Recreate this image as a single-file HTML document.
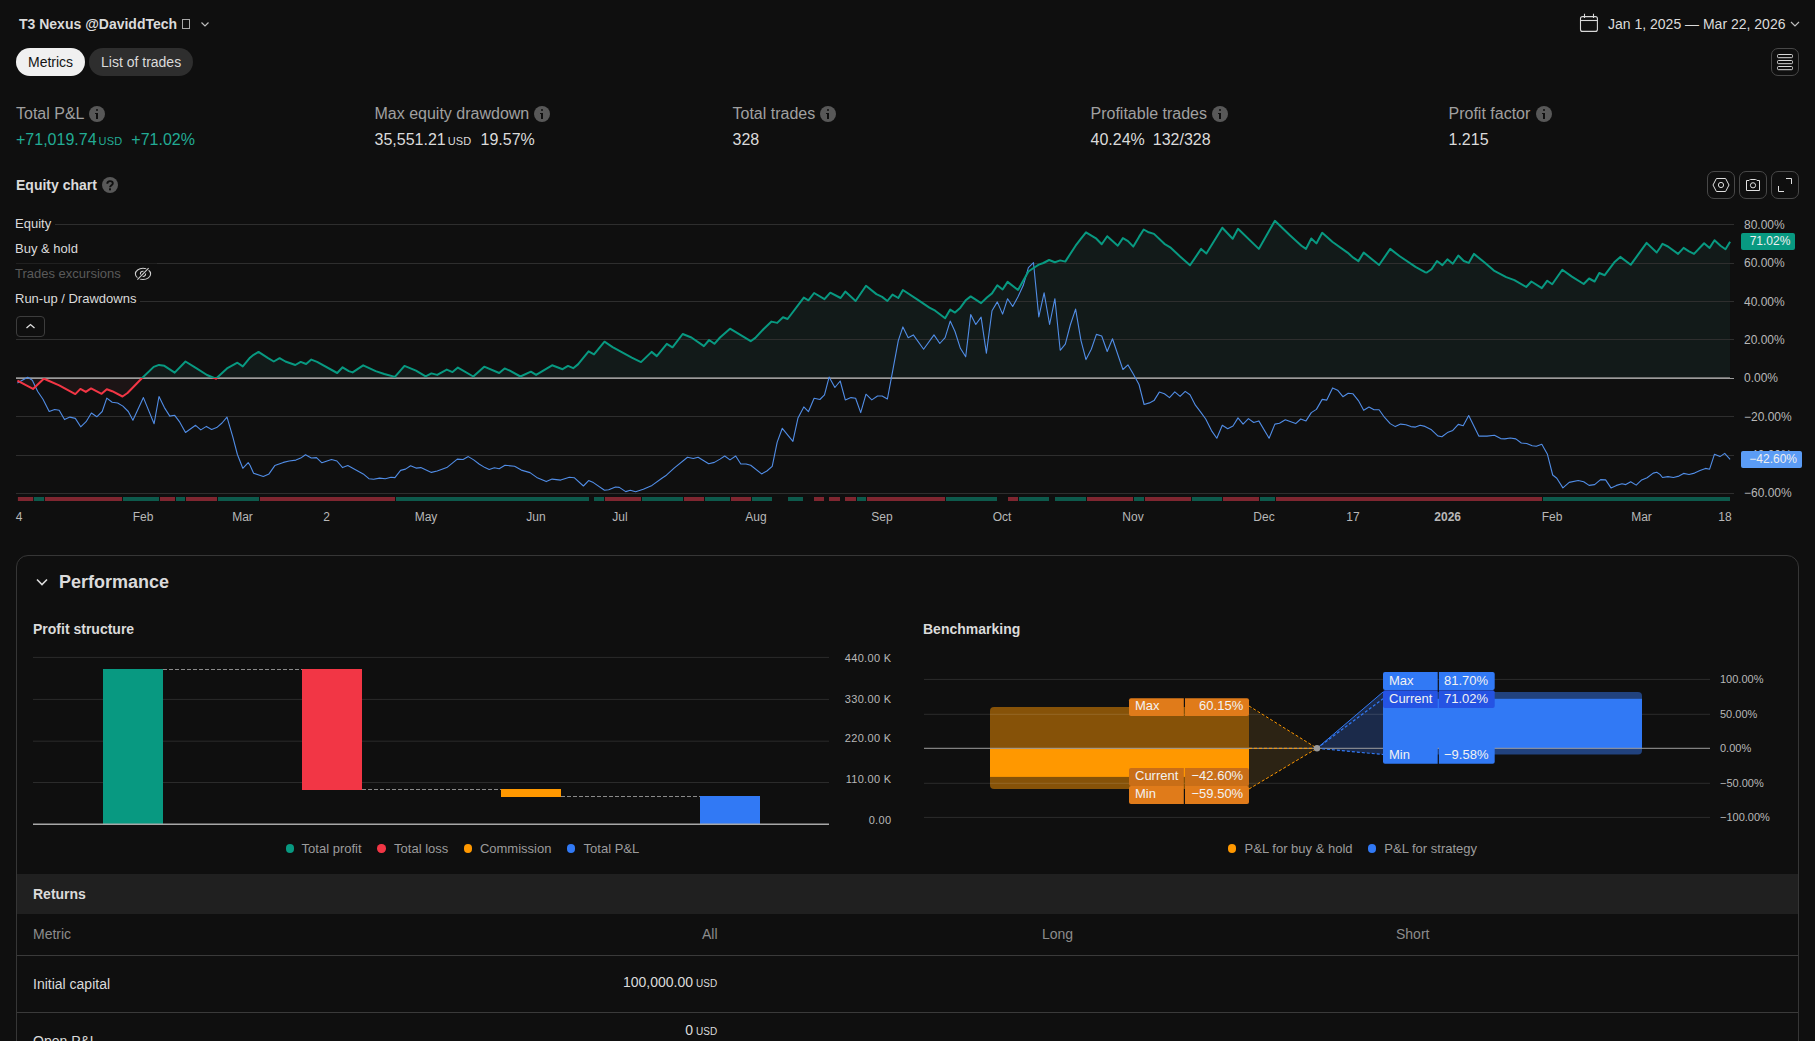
<!DOCTYPE html>
<html><head><meta charset="utf-8">
<style>
*{box-sizing:border-box;margin:0;padding:0}
html,body{width:1815px;height:1041px;overflow:hidden;background:#0f0f0f;font-family:"Liberation Sans",sans-serif;color:#dbdbdb}
.a{position:absolute;white-space:nowrap}
.t13{font-size:13px;line-height:13px}
.t14{font-size:14px;line-height:14px}
.t16{font-size:16px;line-height:16px}
.t12{font-size:12px;line-height:12px}
.t11{font-size:11px;line-height:11px}
.b{font-weight:700}
.lbl{color:#a0a0a0}
.info{display:inline-block;width:16px;height:16px;border-radius:50%;background:#585858;position:absolute}
.info:before{content:"";position:absolute;left:7px;top:2.6px;width:2px;height:2px;background:#0f0f0f;border-radius:1px}
.info:after{content:"";position:absolute;left:6px;top:7px;width:3px;height:5.8px;background:linear-gradient(#0f0f0f,#0f0f0f) 1px 0/2px 100% no-repeat,linear-gradient(#0f0f0f,#0f0f0f) 0 0/1px 1.3px no-repeat}
.usd{font-size:11px}
.btn{position:absolute;width:28px;height:28px;border:1px solid #484848;border-radius:7px}
.grey{color:#8c8c8c}
.axl{color:#b8b8b8}
.legt{color:#9c9c9c}
</style></head>
<body>
<!-- header -->
<div class="a t14 b" style="left:19px;top:17.15px">T3 Nexus @DaviddTech</div>
<div class="a" style="left:182px;top:19px;width:8px;height:10px;border:1px solid #a8a8a8"></div>
<svg class="a" style="left:199px;top:19px" width="12" height="10" viewBox="0 0 12 10"><path d="M2.5 3.5 L6 7 L9.5 3.5" fill="none" stroke="#bdbdbd" stroke-width="1.2"/></svg>

<svg class="a" style="left:1578px;top:13px" width="22" height="20" viewBox="0 0 22 20"><rect x="2.5" y="3.6" width="16.9" height="14.8" rx="2" fill="none" stroke="#d8d8d8" stroke-width="1.1"/><path d="M2.5 7.5 H19.4" stroke="#d8d8d8" stroke-width="1.1"/><path d="M6.5 0.7 V5 M15.5 0.7 V5" stroke="#d8d8d8" stroke-width="1.1"/></svg>
<div class="a t14" style="left:1608px;top:17.45px">Jan 1, 2025 — Mar 22, 2026</div>
<svg class="a" style="left:1789px;top:19px" width="12" height="10" viewBox="0 0 12 10"><path d="M2 3 L6 7 L10 3" fill="none" stroke="#bdbdbd" stroke-width="1.2"/></svg>

<!-- tabs -->
<div class="a" style="left:16px;top:48px;width:69px;height:28px;border-radius:14px;background:#f0f0f0"></div>
<div class="a t14" style="left:28px;top:54.95px;color:#131313">Metrics</div>
<div class="a" style="left:89px;top:48px;width:104px;height:28px;border-radius:14px;background:#2e2e2e"></div>
<div class="a t14" style="left:101px;top:54.95px">List of trades</div>

<div class="btn" style="left:1771px;top:48px"></div>
<svg class="a" style="left:1771px;top:48px" width="28" height="28" viewBox="0 0 28 28"><g fill="none" stroke="#d8d8d8" stroke-width="1"><rect x="6.5" y="6.5" width="15" height="3.2" rx="1"/><rect x="6.5" y="12.5" width="15" height="3.2" rx="1"/><rect x="6.5" y="18.5" width="15" height="3.2" rx="1"/></g></svg>

<!-- metrics -->
<div class="a t16 lbl" style="left:16px;top:105.7px">Total P&amp;L</div><span class="info" style="left:89px;top:106px"></span>
<div class="a t16" style="left:16px;top:131.7px;color:#22ab94">+71,019.74<span class="usd" style="margin-left:2px;letter-spacing:0.2px">USD</span><span style="margin-left:9px">+71.02%</span></div>

<div class="a t16 lbl" style="left:374.5px;top:105.7px">Max equity drawdown</div><span class="info" style="left:534px;top:106px"></span>
<div class="a t16" style="left:374.5px;top:131.7px">35,551.21<span class="usd" style="margin-left:2px;letter-spacing:0.2px">USD</span><span style="margin-left:9px">19.57%</span></div>

<div class="a t16 lbl" style="left:732.5px;top:105.7px">Total trades</div><span class="info" style="left:820px;top:106px"></span>
<div class="a t16" style="left:732.5px;top:131.7px">328</div>

<div class="a t16 lbl" style="left:1090.5px;top:105.7px">Profitable trades</div><span class="info" style="left:1212px;top:106px"></span>
<div class="a t16" style="left:1090.5px;top:131.7px">40.24%<span style="margin-left:8px">132/328</span></div>

<div class="a t16 lbl" style="left:1448.5px;top:105.7px">Profit factor</div><span class="info" style="left:1536px;top:106px"></span>
<div class="a t16" style="left:1448.5px;top:131.7px">1.215</div>

<!-- equity chart header -->
<div class="a t14 b" style="left:16px;top:178px">Equity chart</div>

<div class="btn" style="left:1707px;top:171px"></div>
<div class="btn" style="left:1739px;top:171px"></div>
<div class="btn" style="left:1771px;top:171px"></div>
<svg class="a" style="left:1707px;top:171px" width="28" height="28" viewBox="0 0 28 28"><g fill="none" stroke="#e0e0e0" stroke-width="1"><path d="M6 14 L9.4 7.5 H18.6 L22 14 L18.6 20.5 H9.4Z"/><circle cx="14" cy="14" r="2.6"/></g></svg>
<svg class="a" style="left:1739px;top:171px" width="28" height="28" viewBox="0 0 28 28"><g fill="none" stroke="#e0e0e0" stroke-width="1"><path d="M7.5 9.5 H10 Q10.5 8.5 11.5 8.5 H16.5 Q17.5 8.5 18 9.5 H20.5 V19.5 H7.5Z"/><circle cx="14" cy="14.3" r="2.6"/></g></svg>
<svg class="a" style="left:1771px;top:171px" width="28" height="28" viewBox="0 0 28 28"><g fill="none" stroke="#e0e0e0" stroke-width="1"><path d="M15 7.5 H20.5 V13"/><path d="M7.5 15 V20.5 H13"/></g></svg>
<svg class="a" style="left:102px;top:177px" width="16" height="16" viewBox="0 0 16 16"><circle cx="8" cy="8" r="8" fill="#585858"/><path d="M5.3 6.7 C5.3 5 6.4 4.1 8 4.1 C9.6 4.1 10.8 5 10.8 6.4 C10.8 8.1 8 8.4 8 10.3" fill="none" stroke="#0f0f0f" stroke-width="1.9"/><rect x="7" y="11.3" width="2" height="2" fill="#0f0f0f"/></svg>

<!-- chart legend -->
<div class="a t13" style="left:15px;top:217px;background:#0f0f0f;padding-right:4px;z-index:3">Equity</div>
<div class="a t13" style="left:15px;top:241.7px;background:#0f0f0f;padding-right:4px;z-index:3">Buy &amp; hold</div>
<div class="a" style="left:15px;top:262px;width:142px;height:24px;background:rgba(15,15,15,0.45);z-index:2"></div>
<div class="a t13" style="left:15px;top:266.6px;color:#5a5a5a;z-index:3">Trades excursions</div>
<svg class="a" style="left:133px;top:265px;z-index:3" width="20" height="18" viewBox="0 0 20 18"><g fill="none" stroke="#d0d0d0" stroke-width="1.1"><ellipse cx="10" cy="8.9" rx="7.6" ry="5.6"/><circle cx="10" cy="8.8" r="2.6"/></g><path d="M15.6 3.2 L4.4 14.7" stroke="#0f0f0f" stroke-width="3"/><path d="M15.6 3.2 L4.4 14.7" stroke="#d0d0d0" stroke-width="1.1"/></svg>
<div class="a t13" style="left:15px;top:291.8px;background:#0f0f0f;padding-right:4px;z-index:3">Run-up / Drawdowns</div>
<div class="a" style="left:16px;top:316px;width:29px;height:21px;border:1px solid #3d3d3d;border-radius:4px;background:#0f0f0f;z-index:3"></div>
<svg class="a" style="left:16px;top:316px;z-index:3" width="29" height="21" viewBox="0 0 29 21"><path d="M10.5 12 L14.5 8.5 L18.5 12" fill="none" stroke="#e0e0e0" stroke-width="1.3"/></svg>

<!-- badges -->
<div class="a" style="left:1741.4px;top:233px;width:53.6px;height:17px;border-radius:2px;background:#089981;z-index:3"></div>
<div class="a t12" style="left:1741.4px;top:234.7px;width:49px;text-align:right;color:#f0f0f0;z-index:4">71.02%</div>
<div class="a" style="left:1741px;top:451px;width:61px;height:17px;border-radius:2px;background:#5b9cf6;z-index:3"></div>
<div class="a t12" style="left:1741px;top:452.7px;width:56px;text-align:right;color:#f0f0f0;z-index:4">−42.60%</div>

<!-- CHART -->
<svg class="a" style="left:0;top:200px" width="1815" height="340" viewBox="0 200 1815 340">
<defs><clipPath id="up"><rect x="0" y="200" width="1815" height="178.0"/></clipPath><clipPath id="dn"><rect x="0" y="378.0" width="1815" height="200"/></clipPath></defs>
<path d="M17.4 380.7 L33.0 388.9 L43.8 378.7 L46.9 380.0 L59.2 385.3 L75.3 394.1 L80.4 388.9 L85.8 391.9 L91.1 388.4 L101.6 393.8 L106.8 389.2 L112.2 391.2 L122.5 396.5 L127.5 393.0 L141.4 378.7 L153.7 366.9 L159.0 364.9 L164.4 365.8 L174.7 372.6 L185.5 361.5 L196.2 368.1 L207.0 375.0 L215.9 378.7 L227.0 368.4 L237.4 362.7 L242.8 366.4 L250.0 357.7 L253.6 354.8 L258.5 351.9 L268.1 358.2 L273.8 361.5 L279.6 358.2 L285.4 361.5 L295.3 365.0 L300.7 361.9 L306.1 364.0 L311.3 359.6 L317.1 361.9 L337.2 373.0 L342.6 367.3 L348.8 371.1 L352.6 372.4 L363.2 365.3 L375.7 371.1 L384.3 374.0 L394.9 376.9 L404.5 365.9 L416.0 370.7 L425.6 376.3 L431.4 373.4 L437.2 374.9 L446.8 369.6 L452.5 372.1 L457.9 367.6 L473.3 376.5 L484.2 366.7 L499.2 373.0 L504.6 368.4 L509.8 370.7 L520.4 376.5 L530.9 371.7 L536.1 374.9 L552.1 365.3 L562.6 369.2 L568.0 365.9 L573.2 368.2 L578.0 364.4 L588.6 351.3 L594.0 354.4 L604.5 341.7 L612.6 347.1 L631.8 357.6 L641.0 362.1 L651.6 351.9 L656.8 356.1 L666.8 343.8 L672.5 347.3 L682.7 334.0 L691.4 337.5 L703.9 346.1 L709.1 340.0 L714.4 343.8 L720.0 337.5 L730.0 328.7 L740.4 334.9 L750.7 341.2 L755.3 337.9 L763.4 329.2 L771.5 321.6 L777.2 322.9 L783.0 317.2 L787.6 319.0 L803.8 297.6 L808.4 300.3 L814.1 293.0 L824.5 299.2 L830.3 292.7 L840.6 298.0 L845.3 291.6 L855.6 301.0 L866.0 285.8 L876.4 294.1 L882.1 296.9 L887.4 301.0 L892.5 294.6 L898.3 298.0 L902.9 290.0 L917.9 299.9 L929.4 307.7 L935.2 310.7 L945.1 318.3 L950.2 309.6 L955.0 312.6 L960.4 307.7 L965.7 300.3 L970.7 296.4 L981.1 303.1 L986.9 297.5 L992.0 293.4 L997.3 285.3 L1002.6 289.5 L1007.6 281.9 L1018.0 289.9 L1028.4 271.5 L1033.5 268.0 L1038.8 264.6 L1043.4 263.0 L1049.1 260.0 L1054.9 262.3 L1060.2 260.4 L1065.3 261.6 L1075.6 245.7 L1081.0 238.7 L1086.0 232.3 L1096.4 238.7 L1101.7 244.3 L1107.2 236.2 L1117.8 245.7 L1122.9 238.1 L1128.0 241.1 L1133.3 246.6 L1139.0 236.9 L1143.7 229.5 L1148.7 232.3 L1154.0 233.9 L1164.4 243.8 L1170.2 247.3 L1180.1 256.5 L1190.0 265.3 L1201.1 248.9 L1206.4 253.5 L1222.3 227.7 L1232.7 238.7 L1238.0 228.8 L1258.8 248.9 L1274.9 220.8 L1289.9 235.3 L1301.4 245.7 L1306.0 248.9 L1311.3 238.5 L1316.4 243.4 L1322.2 232.8 L1332.6 242.0 L1347.5 252.6 L1353.3 257.7 L1358.4 261.1 L1363.7 252.6 L1379.1 265.0 L1390.2 248.9 L1399.4 256.0 L1415.5 266.9 L1425.0 272.2 L1426.8 272.5 L1431.5 269.2 L1437.0 261.0 L1442.4 265.1 L1447.4 259.3 L1452.8 263.7 L1458.3 255.5 L1463.8 261.0 L1468.7 262.9 L1473.9 253.9 L1484.3 262.3 L1493.9 270.6 L1506.2 277.1 L1514.4 280.1 L1526.2 287.0 L1531.4 281.5 L1541.8 288.1 L1547.3 280.7 L1552.2 284.2 L1562.3 269.7 L1571.9 276.6 L1583.7 284.0 L1589.1 278.5 L1594.6 281.5 L1599.3 273.0 L1604.7 275.2 L1614.3 262.3 L1620.3 256.9 L1630.7 264.8 L1646.6 242.9 L1656.7 252.5 L1660.0 247.8 L1662.5 243.8 L1667.9 246.5 L1678.1 253.9 L1683.6 247.9 L1689.0 251.4 L1694.0 253.9 L1704.1 243.2 L1709.6 247.9 L1714.5 240.2 L1720.5 245.7 L1725.5 249.2 L1730.1 241.8 L1730.1 378.0 L17.4 378.0Z" fill="#121a19" clip-path="url(#up)"/>
<path d="M17.4 380.7 L33.0 388.9 L43.8 378.7 L46.9 380.0 L59.2 385.3 L75.3 394.1 L80.4 388.9 L85.8 391.9 L91.1 388.4 L101.6 393.8 L106.8 389.2 L112.2 391.2 L122.5 396.5 L127.5 393.0 L141.4 378.7 L153.7 366.9 L159.0 364.9 L164.4 365.8 L174.7 372.6 L185.5 361.5 L196.2 368.1 L207.0 375.0 L215.9 378.7 L227.0 368.4 L237.4 362.7 L242.8 366.4 L250.0 357.7 L253.6 354.8 L258.5 351.9 L268.1 358.2 L273.8 361.5 L279.6 358.2 L285.4 361.5 L295.3 365.0 L300.7 361.9 L306.1 364.0 L311.3 359.6 L317.1 361.9 L337.2 373.0 L342.6 367.3 L348.8 371.1 L352.6 372.4 L363.2 365.3 L375.7 371.1 L384.3 374.0 L394.9 376.9 L404.5 365.9 L416.0 370.7 L425.6 376.3 L431.4 373.4 L437.2 374.9 L446.8 369.6 L452.5 372.1 L457.9 367.6 L473.3 376.5 L484.2 366.7 L499.2 373.0 L504.6 368.4 L509.8 370.7 L520.4 376.5 L530.9 371.7 L536.1 374.9 L552.1 365.3 L562.6 369.2 L568.0 365.9 L573.2 368.2 L578.0 364.4 L588.6 351.3 L594.0 354.4 L604.5 341.7 L612.6 347.1 L631.8 357.6 L641.0 362.1 L651.6 351.9 L656.8 356.1 L666.8 343.8 L672.5 347.3 L682.7 334.0 L691.4 337.5 L703.9 346.1 L709.1 340.0 L714.4 343.8 L720.0 337.5 L730.0 328.7 L740.4 334.9 L750.7 341.2 L755.3 337.9 L763.4 329.2 L771.5 321.6 L777.2 322.9 L783.0 317.2 L787.6 319.0 L803.8 297.6 L808.4 300.3 L814.1 293.0 L824.5 299.2 L830.3 292.7 L840.6 298.0 L845.3 291.6 L855.6 301.0 L866.0 285.8 L876.4 294.1 L882.1 296.9 L887.4 301.0 L892.5 294.6 L898.3 298.0 L902.9 290.0 L917.9 299.9 L929.4 307.7 L935.2 310.7 L945.1 318.3 L950.2 309.6 L955.0 312.6 L960.4 307.7 L965.7 300.3 L970.7 296.4 L981.1 303.1 L986.9 297.5 L992.0 293.4 L997.3 285.3 L1002.6 289.5 L1007.6 281.9 L1018.0 289.9 L1028.4 271.5 L1033.5 268.0 L1038.8 264.6 L1043.4 263.0 L1049.1 260.0 L1054.9 262.3 L1060.2 260.4 L1065.3 261.6 L1075.6 245.7 L1081.0 238.7 L1086.0 232.3 L1096.4 238.7 L1101.7 244.3 L1107.2 236.2 L1117.8 245.7 L1122.9 238.1 L1128.0 241.1 L1133.3 246.6 L1139.0 236.9 L1143.7 229.5 L1148.7 232.3 L1154.0 233.9 L1164.4 243.8 L1170.2 247.3 L1180.1 256.5 L1190.0 265.3 L1201.1 248.9 L1206.4 253.5 L1222.3 227.7 L1232.7 238.7 L1238.0 228.8 L1258.8 248.9 L1274.9 220.8 L1289.9 235.3 L1301.4 245.7 L1306.0 248.9 L1311.3 238.5 L1316.4 243.4 L1322.2 232.8 L1332.6 242.0 L1347.5 252.6 L1353.3 257.7 L1358.4 261.1 L1363.7 252.6 L1379.1 265.0 L1390.2 248.9 L1399.4 256.0 L1415.5 266.9 L1425.0 272.2 L1426.8 272.5 L1431.5 269.2 L1437.0 261.0 L1442.4 265.1 L1447.4 259.3 L1452.8 263.7 L1458.3 255.5 L1463.8 261.0 L1468.7 262.9 L1473.9 253.9 L1484.3 262.3 L1493.9 270.6 L1506.2 277.1 L1514.4 280.1 L1526.2 287.0 L1531.4 281.5 L1541.8 288.1 L1547.3 280.7 L1552.2 284.2 L1562.3 269.7 L1571.9 276.6 L1583.7 284.0 L1589.1 278.5 L1594.6 281.5 L1599.3 273.0 L1604.7 275.2 L1614.3 262.3 L1620.3 256.9 L1630.7 264.8 L1646.6 242.9 L1656.7 252.5 L1660.0 247.8 L1662.5 243.8 L1667.9 246.5 L1678.1 253.9 L1683.6 247.9 L1689.0 251.4 L1694.0 253.9 L1704.1 243.2 L1709.6 247.9 L1714.5 240.2 L1720.5 245.7 L1725.5 249.2 L1730.1 241.8 L1730.1 378.0 L17.4 378.0Z" fill="#1c1415" clip-path="url(#dn)"/>
<line x1="16" y1="224.5" x2="1734" y2="224.5" stroke="#2e2e2e" stroke-width="1"/>
<line x1="16" y1="263.5" x2="1734" y2="263.5" stroke="#2e2e2e" stroke-width="1"/>
<line x1="16" y1="301.5" x2="1734" y2="301.5" stroke="#2e2e2e" stroke-width="1"/>
<line x1="16" y1="339.5" x2="1734" y2="339.5" stroke="#2e2e2e" stroke-width="1"/>
<line x1="16" y1="416.5" x2="1734" y2="416.5" stroke="#2e2e2e" stroke-width="1"/>
<line x1="16" y1="455.5" x2="1734" y2="455.5" stroke="#2e2e2e" stroke-width="1"/>
<line x1="16" y1="493.5" x2="1734" y2="493.5" stroke="#2e2e2e" stroke-width="1"/>
<rect x="16" y="377" width="1714" height="1" fill="#727272"/><rect x="16" y="378" width="1718" height="1" fill="#9c9c9c"/>
<path d="M17.4 383.0 L27.7 377.3 L32.3 380.3 L37.7 391.5 L43.0 399.2 L49.2 411.5 L54.6 409.5 L59.2 410.2 L64.5 419.6 L69.9 417.1 L75.3 418.4 L80.7 426.8 L86.1 421.7 L91.4 413.0 L96.8 416.8 L102.2 411.5 L106.8 398.1 L112.2 402.2 L117.6 403.0 L122.9 406.1 L128.3 411.5 L132.9 420.2 L143.4 397.6 L154.1 423.7 L159.0 396.5 L164.4 407.6 L169.8 416.1 L174.7 415.3 L179.8 422.2 L185.5 432.5 L195.6 425.3 L200.8 429.9 L206.4 426.4 L211.6 429.4 L216.7 427.6 L222.0 423.0 L227.0 417.1 L232.8 436.8 L237.4 454.5 L242.8 468.3 L248.2 462.6 L250.0 465.2 L253.6 473.3 L263.3 476.4 L269.0 473.9 L274.8 465.6 L283.4 462.4 L289.2 461.0 L295.9 460.1 L300.7 458.1 L305.5 454.7 L311.3 458.0 L316.5 457.6 L321.9 462.8 L331.5 459.5 L336.9 461.0 L342.6 467.6 L347.8 465.6 L363.2 473.9 L368.9 478.7 L373.7 479.3 L379.5 478.1 L385.3 478.7 L391.0 477.2 L394.9 477.6 L400.6 470.4 L405.5 469.1 L410.6 465.8 L416.0 468.1 L420.8 467.6 L431.4 472.4 L437.2 471.0 L446.8 467.6 L457.3 459.1 L463.1 459.5 L468.3 456.6 L473.7 459.9 L479.4 464.3 L485.0 467.6 L489.2 469.5 L494.4 467.8 L499.2 468.7 L505.0 465.3 L514.6 466.2 L521.3 470.1 L530.0 472.6 L536.7 477.4 L546.3 481.6 L552.1 479.1 L560.7 480.1 L569.4 477.2 L574.2 477.7 L583.4 486.0 L588.6 480.6 L593.4 482.6 L604.5 490.2 L608.7 489.7 L615.5 487.0 L619.3 487.4 L625.7 491.6 L630.3 490.2 L635.6 491.8 L643.3 489.3 L652.0 485.4 L662.6 477.7 L666.4 475.2 L674.1 468.1 L687.5 457.2 L693.3 458.5 L698.1 457.2 L708.7 463.7 L714.4 462.4 L720.0 459.1 L724.7 456.0 L730.0 459.9 L735.7 456.0 L740.8 464.0 L746.1 464.0 L750.7 465.2 L761.6 473.9 L766.9 471.0 L772.2 466.3 L777.2 442.1 L782.3 428.3 L792.9 441.4 L798.0 417.9 L803.8 406.9 L808.4 411.7 L814.1 398.3 L819.9 399.5 L824.5 394.9 L829.1 377.1 L834.9 387.5 L840.2 381.0 L845.3 399.9 L851.0 397.6 L855.6 398.3 L860.7 412.6 L866.0 394.2 L871.8 399.9 L877.5 396.0 L882.1 396.0 L887.4 399.0 L892.5 371.8 L898.3 340.7 L902.9 326.9 L908.2 337.7 L913.3 334.9 L923.6 349.2 L934.0 334.9 L939.8 343.5 L945.1 337.7 L950.2 321.1 L955.0 331.5 L960.4 348.3 L965.7 356.8 L970.7 314.6 L975.8 324.5 L981.1 317.1 L986.4 353.3 L992.0 310.7 L997.3 301.9 L1002.6 314.1 L1007.6 298.7 L1012.7 306.5 L1018.0 296.8 L1023.3 285.3 L1028.4 267.6 L1033.5 262.7 L1038.8 316.9 L1044.1 292.9 L1049.6 324.5 L1054.9 298.7 L1060.2 350.3 L1065.3 344.1 L1070.3 325.0 L1075.6 309.1 L1081.0 340.6 L1086.0 359.6 L1091.3 349.2 L1096.4 334.4 L1101.7 336.0 L1107.2 351.5 L1112.5 338.8 L1117.8 354.5 L1122.9 369.5 L1128.0 364.9 L1133.3 374.1 L1139.0 384.5 L1144.1 404.5 L1149.4 402.9 L1154.0 400.6 L1159.3 392.1 L1164.4 393.7 L1169.5 397.6 L1174.8 391.8 L1180.1 396.4 L1185.2 391.4 L1190.0 394.8 L1195.4 405.2 L1200.7 412.1 L1205.7 419.0 L1211.5 430.6 L1216.8 438.2 L1222.3 425.3 L1227.7 428.7 L1233.0 426.0 L1238.0 417.9 L1243.1 424.1 L1248.4 418.6 L1253.7 422.5 L1258.8 420.9 L1269.1 438.2 L1274.9 424.1 L1279.5 423.2 L1285.3 419.7 L1295.7 423.6 L1300.7 419.0 L1306.0 420.9 L1311.3 412.6 L1316.4 409.4 L1322.2 399.4 L1326.8 400.1 L1332.6 387.9 L1337.6 390.2 L1342.9 396.7 L1348.2 393.2 L1352.8 393.7 L1358.4 400.6 L1363.7 410.3 L1369.0 407.0 L1374.0 409.8 L1379.1 409.8 L1384.4 417.2 L1390.2 423.6 L1395.3 426.6 L1400.6 424.1 L1405.9 424.8 L1410.9 426.6 L1415.5 427.1 L1420.2 425.3 L1425.0 426.4 L1431.5 429.8 L1437.8 435.9 L1441.9 436.7 L1447.4 432.6 L1452.8 430.4 L1458.3 424.4 L1463.2 425.7 L1468.7 415.6 L1478.8 436.1 L1487.0 436.1 L1494.4 435.3 L1500.7 438.6 L1504.8 438.9 L1510.3 438.0 L1515.8 438.9 L1521.3 443.0 L1526.7 443.5 L1532.2 445.7 L1536.3 446.3 L1541.8 444.3 L1547.3 453.9 L1552.7 475.0 L1556.8 478.3 L1562.9 487.9 L1569.2 482.4 L1578.2 480.5 L1583.7 481.8 L1589.1 485.4 L1594.6 484.6 L1600.6 479.6 L1605.6 479.9 L1611.0 487.9 L1616.5 485.4 L1622.0 483.7 L1625.8 484.6 L1630.7 481.8 L1636.2 485.1 L1641.7 479.9 L1647.1 477.7 L1653.2 473.1 L1656.7 472.3 L1660.0 474.4 L1662.5 477.5 L1667.9 476.6 L1673.4 477.5 L1678.9 476.1 L1683.6 473.4 L1689.0 474.5 L1694.5 473.1 L1700.0 470.6 L1705.5 468.4 L1709.6 469.2 L1714.5 454.2 L1720.0 456.6 L1724.7 453.4 L1730.1 459.4" fill="none" stroke="#518de6" stroke-width="1.1" stroke-linejoin="round"/>
<path d="M17.4 380.7 L33.0 388.9 L43.8 378.7 L46.9 380.0 L59.2 385.3 L75.3 394.1 L80.4 388.9 L85.8 391.9 L91.1 388.4 L101.6 393.8 L106.8 389.2 L112.2 391.2 L122.5 396.5 L127.5 393.0 L141.4 378.7 L153.7 366.9 L159.0 364.9 L164.4 365.8 L174.7 372.6 L185.5 361.5 L196.2 368.1 L207.0 375.0 L215.9 378.7 L227.0 368.4 L237.4 362.7 L242.8 366.4 L250.0 357.7 L253.6 354.8 L258.5 351.9 L268.1 358.2 L273.8 361.5 L279.6 358.2 L285.4 361.5 L295.3 365.0 L300.7 361.9 L306.1 364.0 L311.3 359.6 L317.1 361.9 L337.2 373.0 L342.6 367.3 L348.8 371.1 L352.6 372.4 L363.2 365.3 L375.7 371.1 L384.3 374.0 L394.9 376.9 L404.5 365.9 L416.0 370.7 L425.6 376.3 L431.4 373.4 L437.2 374.9 L446.8 369.6 L452.5 372.1 L457.9 367.6 L473.3 376.5 L484.2 366.7 L499.2 373.0 L504.6 368.4 L509.8 370.7 L520.4 376.5 L530.9 371.7 L536.1 374.9 L552.1 365.3 L562.6 369.2 L568.0 365.9 L573.2 368.2 L578.0 364.4 L588.6 351.3 L594.0 354.4 L604.5 341.7 L612.6 347.1 L631.8 357.6 L641.0 362.1 L651.6 351.9 L656.8 356.1 L666.8 343.8 L672.5 347.3 L682.7 334.0 L691.4 337.5 L703.9 346.1 L709.1 340.0 L714.4 343.8 L720.0 337.5 L730.0 328.7 L740.4 334.9 L750.7 341.2 L755.3 337.9 L763.4 329.2 L771.5 321.6 L777.2 322.9 L783.0 317.2 L787.6 319.0 L803.8 297.6 L808.4 300.3 L814.1 293.0 L824.5 299.2 L830.3 292.7 L840.6 298.0 L845.3 291.6 L855.6 301.0 L866.0 285.8 L876.4 294.1 L882.1 296.9 L887.4 301.0 L892.5 294.6 L898.3 298.0 L902.9 290.0 L917.9 299.9 L929.4 307.7 L935.2 310.7 L945.1 318.3 L950.2 309.6 L955.0 312.6 L960.4 307.7 L965.7 300.3 L970.7 296.4 L981.1 303.1 L986.9 297.5 L992.0 293.4 L997.3 285.3 L1002.6 289.5 L1007.6 281.9 L1018.0 289.9 L1028.4 271.5 L1033.5 268.0 L1038.8 264.6 L1043.4 263.0 L1049.1 260.0 L1054.9 262.3 L1060.2 260.4 L1065.3 261.6 L1075.6 245.7 L1081.0 238.7 L1086.0 232.3 L1096.4 238.7 L1101.7 244.3 L1107.2 236.2 L1117.8 245.7 L1122.9 238.1 L1128.0 241.1 L1133.3 246.6 L1139.0 236.9 L1143.7 229.5 L1148.7 232.3 L1154.0 233.9 L1164.4 243.8 L1170.2 247.3 L1180.1 256.5 L1190.0 265.3 L1201.1 248.9 L1206.4 253.5 L1222.3 227.7 L1232.7 238.7 L1238.0 228.8 L1258.8 248.9 L1274.9 220.8 L1289.9 235.3 L1301.4 245.7 L1306.0 248.9 L1311.3 238.5 L1316.4 243.4 L1322.2 232.8 L1332.6 242.0 L1347.5 252.6 L1353.3 257.7 L1358.4 261.1 L1363.7 252.6 L1379.1 265.0 L1390.2 248.9 L1399.4 256.0 L1415.5 266.9 L1425.0 272.2 L1426.8 272.5 L1431.5 269.2 L1437.0 261.0 L1442.4 265.1 L1447.4 259.3 L1452.8 263.7 L1458.3 255.5 L1463.8 261.0 L1468.7 262.9 L1473.9 253.9 L1484.3 262.3 L1493.9 270.6 L1506.2 277.1 L1514.4 280.1 L1526.2 287.0 L1531.4 281.5 L1541.8 288.1 L1547.3 280.7 L1552.2 284.2 L1562.3 269.7 L1571.9 276.6 L1583.7 284.0 L1589.1 278.5 L1594.6 281.5 L1599.3 273.0 L1604.7 275.2 L1614.3 262.3 L1620.3 256.9 L1630.7 264.8 L1646.6 242.9 L1656.7 252.5 L1660.0 247.8 L1662.5 243.8 L1667.9 246.5 L1678.1 253.9 L1683.6 247.9 L1689.0 251.4 L1694.0 253.9 L1704.1 243.2 L1709.6 247.9 L1714.5 240.2 L1720.5 245.7 L1725.5 249.2 L1730.1 241.8" fill="none" stroke="#089981" stroke-width="2" stroke-linejoin="round" clip-path="url(#up)"/>
<path d="M17.4 380.7 L33.0 388.9 L43.8 378.7 L46.9 380.0 L59.2 385.3 L75.3 394.1 L80.4 388.9 L85.8 391.9 L91.1 388.4 L101.6 393.8 L106.8 389.2 L112.2 391.2 L122.5 396.5 L127.5 393.0 L141.4 378.7 L153.7 366.9 L159.0 364.9 L164.4 365.8 L174.7 372.6 L185.5 361.5 L196.2 368.1 L207.0 375.0 L215.9 378.7 L227.0 368.4 L237.4 362.7 L242.8 366.4 L250.0 357.7 L253.6 354.8 L258.5 351.9 L268.1 358.2 L273.8 361.5 L279.6 358.2 L285.4 361.5 L295.3 365.0 L300.7 361.9 L306.1 364.0 L311.3 359.6 L317.1 361.9 L337.2 373.0 L342.6 367.3 L348.8 371.1 L352.6 372.4 L363.2 365.3 L375.7 371.1 L384.3 374.0 L394.9 376.9 L404.5 365.9 L416.0 370.7 L425.6 376.3 L431.4 373.4 L437.2 374.9 L446.8 369.6 L452.5 372.1 L457.9 367.6 L473.3 376.5 L484.2 366.7 L499.2 373.0 L504.6 368.4 L509.8 370.7 L520.4 376.5 L530.9 371.7 L536.1 374.9 L552.1 365.3 L562.6 369.2 L568.0 365.9 L573.2 368.2 L578.0 364.4 L588.6 351.3 L594.0 354.4 L604.5 341.7 L612.6 347.1 L631.8 357.6 L641.0 362.1 L651.6 351.9 L656.8 356.1 L666.8 343.8 L672.5 347.3 L682.7 334.0 L691.4 337.5 L703.9 346.1 L709.1 340.0 L714.4 343.8 L720.0 337.5 L730.0 328.7 L740.4 334.9 L750.7 341.2 L755.3 337.9 L763.4 329.2 L771.5 321.6 L777.2 322.9 L783.0 317.2 L787.6 319.0 L803.8 297.6 L808.4 300.3 L814.1 293.0 L824.5 299.2 L830.3 292.7 L840.6 298.0 L845.3 291.6 L855.6 301.0 L866.0 285.8 L876.4 294.1 L882.1 296.9 L887.4 301.0 L892.5 294.6 L898.3 298.0 L902.9 290.0 L917.9 299.9 L929.4 307.7 L935.2 310.7 L945.1 318.3 L950.2 309.6 L955.0 312.6 L960.4 307.7 L965.7 300.3 L970.7 296.4 L981.1 303.1 L986.9 297.5 L992.0 293.4 L997.3 285.3 L1002.6 289.5 L1007.6 281.9 L1018.0 289.9 L1028.4 271.5 L1033.5 268.0 L1038.8 264.6 L1043.4 263.0 L1049.1 260.0 L1054.9 262.3 L1060.2 260.4 L1065.3 261.6 L1075.6 245.7 L1081.0 238.7 L1086.0 232.3 L1096.4 238.7 L1101.7 244.3 L1107.2 236.2 L1117.8 245.7 L1122.9 238.1 L1128.0 241.1 L1133.3 246.6 L1139.0 236.9 L1143.7 229.5 L1148.7 232.3 L1154.0 233.9 L1164.4 243.8 L1170.2 247.3 L1180.1 256.5 L1190.0 265.3 L1201.1 248.9 L1206.4 253.5 L1222.3 227.7 L1232.7 238.7 L1238.0 228.8 L1258.8 248.9 L1274.9 220.8 L1289.9 235.3 L1301.4 245.7 L1306.0 248.9 L1311.3 238.5 L1316.4 243.4 L1322.2 232.8 L1332.6 242.0 L1347.5 252.6 L1353.3 257.7 L1358.4 261.1 L1363.7 252.6 L1379.1 265.0 L1390.2 248.9 L1399.4 256.0 L1415.5 266.9 L1425.0 272.2 L1426.8 272.5 L1431.5 269.2 L1437.0 261.0 L1442.4 265.1 L1447.4 259.3 L1452.8 263.7 L1458.3 255.5 L1463.8 261.0 L1468.7 262.9 L1473.9 253.9 L1484.3 262.3 L1493.9 270.6 L1506.2 277.1 L1514.4 280.1 L1526.2 287.0 L1531.4 281.5 L1541.8 288.1 L1547.3 280.7 L1552.2 284.2 L1562.3 269.7 L1571.9 276.6 L1583.7 284.0 L1589.1 278.5 L1594.6 281.5 L1599.3 273.0 L1604.7 275.2 L1614.3 262.3 L1620.3 256.9 L1630.7 264.8 L1646.6 242.9 L1656.7 252.5 L1660.0 247.8 L1662.5 243.8 L1667.9 246.5 L1678.1 253.9 L1683.6 247.9 L1689.0 251.4 L1694.0 253.9 L1704.1 243.2 L1709.6 247.9 L1714.5 240.2 L1720.5 245.7 L1725.5 249.2 L1730.1 241.8" fill="none" stroke="#f23645" stroke-width="2" stroke-linejoin="round" clip-path="url(#dn)"/>
<rect x="17.9" y="497" width="15.2" height="4" fill="#7f2630"/>
<rect x="33.9" y="497" width="10.2" height="4" fill="#0d5a4c"/>
<rect x="45.0" y="497" width="77.0" height="4" fill="#7f2630"/>
<rect x="123.0" y="497" width="36.0" height="4" fill="#0d5a4c"/>
<rect x="160.0" y="497" width="15.0" height="4" fill="#7f2630"/>
<rect x="176.0" y="497" width="9.0" height="4" fill="#0d5a4c"/>
<rect x="186.0" y="497" width="31.0" height="4" fill="#7f2630"/>
<rect x="218.0" y="497" width="41.0" height="4" fill="#0d5a4c"/>
<rect x="260.0" y="497" width="135.0" height="4" fill="#7f2630"/>
<rect x="396.0" y="497" width="193.0" height="4" fill="#0d5a4c"/>
<rect x="594.0" y="497" width="10.0" height="4" fill="#0d5a4c"/>
<rect x="605.0" y="497" width="36.0" height="4" fill="#7f2630"/>
<rect x="642.0" y="497" width="41.0" height="4" fill="#0d5a4c"/>
<rect x="684.0" y="497" width="20.0" height="4" fill="#7f2630"/>
<rect x="705.0" y="497" width="25.0" height="4" fill="#0d5a4c"/>
<rect x="731.0" y="497" width="20.0" height="4" fill="#7f2630"/>
<rect x="752.0" y="497" width="20.0" height="4" fill="#0d5a4c"/>
<rect x="788.0" y="497" width="15.0" height="4" fill="#0d5a4c"/>
<rect x="814.0" y="497" width="10.0" height="4" fill="#7f2630"/>
<rect x="829.0" y="497" width="11.0" height="4" fill="#7f2630"/>
<rect x="845.0" y="497" width="11.0" height="4" fill="#7f2630"/>
<rect x="857.0" y="497" width="9.0" height="4" fill="#0d5a4c"/>
<rect x="867.0" y="497" width="78.0" height="4" fill="#7f2630"/>
<rect x="946.0" y="497" width="51.0" height="4" fill="#0d5a4c"/>
<rect x="1008.0" y="497" width="10.0" height="4" fill="#7f2630"/>
<rect x="1019.0" y="497" width="30.0" height="4" fill="#0d5a4c"/>
<rect x="1055.0" y="497" width="31.0" height="4" fill="#0d5a4c"/>
<rect x="1087.0" y="497" width="46.0" height="4" fill="#7f2630"/>
<rect x="1134.0" y="497" width="10.0" height="4" fill="#0d5a4c"/>
<rect x="1145.0" y="497" width="46.0" height="4" fill="#7f2630"/>
<rect x="1192.0" y="497" width="30.0" height="4" fill="#0d5a4c"/>
<rect x="1223.0" y="497" width="36.0" height="4" fill="#7f2630"/>
<rect x="1260.0" y="497" width="15.0" height="4" fill="#0d5a4c"/>
<rect x="1276.0" y="497" width="266.0" height="4" fill="#7f2630"/>
<rect x="1543.0" y="497" width="187.0" height="4" fill="#0d5a4c"/>
</svg>
<div class="a t12 axl" style="left:1744px;top:219.0px">80.00%</div>
<div class="a t12 axl" style="left:1744px;top:257.0px">60.00%</div>
<div class="a t12 axl" style="left:1744px;top:296.0px">40.00%</div>
<div class="a t12 axl" style="left:1744px;top:334.0px">20.00%</div>
<div class="a t12 axl" style="left:1744px;top:372.0px">0.00%</div>
<div class="a t12 axl" style="left:1744px;top:411.0px">−20.00%</div>
<div class="a t12 axl" style="left:1744px;top:449.0px">−40.00%</div>
<div class="a t12 axl" style="left:1744px;top:487.0px">−60.00%</div>
<div class="a t12 axl" style="left:-31.0px;width:100px;text-align:center;top:510.6px">4</div>
<div class="a t12 axl" style="left:93.0px;width:100px;text-align:center;top:510.6px">Feb</div>
<div class="a t12 axl" style="left:192.5px;width:100px;text-align:center;top:510.6px">Mar</div>
<div class="a t12 axl" style="left:276.7px;width:100px;text-align:center;top:510.6px">2</div>
<div class="a t12 axl" style="left:376.0px;width:100px;text-align:center;top:510.6px">May</div>
<div class="a t12 axl" style="left:486.0px;width:100px;text-align:center;top:510.6px">Jun</div>
<div class="a t12 axl" style="left:570.0px;width:100px;text-align:center;top:510.6px">Jul</div>
<div class="a t12 axl" style="left:706.0px;width:100px;text-align:center;top:510.6px">Aug</div>
<div class="a t12 axl" style="left:832.0px;width:100px;text-align:center;top:510.6px">Sep</div>
<div class="a t12 axl" style="left:952.0px;width:100px;text-align:center;top:510.6px">Oct</div>
<div class="a t12 axl" style="left:1083.0px;width:100px;text-align:center;top:510.6px">Nov</div>
<div class="a t12 axl" style="left:1214.0px;width:100px;text-align:center;top:510.6px">Dec</div>
<div class="a t12 axl" style="left:1303.0px;width:100px;text-align:center;top:510.6px">17</div>
<div class="a t12 axl b" style="left:1397.7px;width:100px;text-align:center;top:510.6px">2026</div>
<div class="a t12 axl" style="left:1502.0px;width:100px;text-align:center;top:510.6px">Feb</div>
<div class="a t12 axl" style="left:1591.5px;width:100px;text-align:center;top:510.6px">Mar</div>
<div class="a t12 axl" style="left:1675.0px;width:100px;text-align:center;top:510.6px">18</div>

<!-- performance panel -->
<div class="a" style="left:16px;top:555px;width:1783px;height:600px;border:1px solid #363636;border-radius:12px"></div>
<svg class="a" style="left:34px;top:576px" width="16" height="12" viewBox="0 0 16 12"><path d="M3 3.5 L8 8.5 L13 3.5" fill="none" stroke="#dbdbdb" stroke-width="1.6"/></svg>
<div class="a b" style="left:59px;top:572.96px;font-size:18px;line-height:18px">Performance</div>

<div class="a t14 b" style="left:33px;top:622.15px">Profit structure</div>
<div class="a t14 b" style="left:923px;top:622.15px">Benchmarking</div>

<svg class="a" style="left:0;top:640px" width="1815" height="230" viewBox="0 640 1815 230">
<line x1="33" y1="657.4" x2="829" y2="657.4" stroke="#2b2b2b" stroke-width="1"/>
<line x1="33" y1="699.4" x2="829" y2="699.4" stroke="#2b2b2b" stroke-width="1"/>
<line x1="33" y1="741.2" x2="829" y2="741.2" stroke="#2b2b2b" stroke-width="1"/>
<line x1="33" y1="782.5" x2="829" y2="782.5" stroke="#2b2b2b" stroke-width="1"/>
<rect x="103" y="669" width="60" height="155" fill="#089981"/>
<rect x="302" y="669" width="60" height="121" fill="#f23645"/>
<rect x="501" y="789" width="60" height="8" fill="#ff9800"/>
<rect x="700" y="796" width="60" height="28" fill="#3179f5"/>
<line x1="163" y1="669.5" x2="302" y2="669.5" stroke="#8a8a8a" stroke-width="1" stroke-dasharray="4 2"/>
<line x1="362" y1="789.5" x2="501" y2="789.5" stroke="#8a8a8a" stroke-width="1" stroke-dasharray="4 2"/>
<line x1="561" y1="796.5" x2="700" y2="796.5" stroke="#8a8a8a" stroke-width="1" stroke-dasharray="4 2"/>
<line x1="33" y1="824.3" x2="829" y2="824.3" stroke="#a8a8a8" stroke-width="1.5"/>
<rect x="990" y="707" width="259" height="82" rx="4" fill="#865208"/>
<path d="M1249 707 L1317 748.3 L1249 789Z" fill="#2c2314"/>
<rect x="1383" y="692" width="259" height="62.5" rx="4" fill="#21427e"/>
<path d="M1383 692 L1317 748.3 L1383 754.5Z" fill="#1b2a4a"/>
<line x1="924" y1="679.4" x2="1710" y2="679.4" stroke="#ffffff" stroke-opacity="0.12" stroke-width="1"/>
<line x1="924" y1="714.3" x2="1710" y2="714.3" stroke="#ffffff" stroke-opacity="0.12" stroke-width="1"/>
<line x1="924" y1="783.3" x2="1710" y2="783.3" stroke="#ffffff" stroke-opacity="0.12" stroke-width="1"/>
<line x1="924" y1="817.4" x2="1710" y2="817.4" stroke="#ffffff" stroke-opacity="0.12" stroke-width="1"/>
<rect x="990" y="748.3" width="259" height="28.6" fill="#ff9800"/>
<rect x="1383" y="698.8" width="259" height="49.5" fill="#3179f5"/>
<line x1="924" y1="748.3" x2="1710" y2="748.3" stroke="#9e9e9e" stroke-width="1"/>
<path d="M1249 706 L1317 748.3 M1249 789 L1317 748.3 M1249 748.3 L1317 748.3" stroke="#ff9800" stroke-width="1" stroke-dasharray="3 2" fill="none"/>
<path d="M1317 748.3 L1383 692" stroke="#3179f5" stroke-width="1" fill="none"/>
<path d="M1317 748.3 L1383 698.8 M1317 748.3 L1383 754.5" stroke="#3179f5" stroke-width="1.2" stroke-dasharray="3 2" fill="none"/>
<circle cx="1317" cy="748.3" r="3.2" fill="#9a9a9a"/>
<path d="M1131.00 698.20 H1183.80 Q1183.80 698.20 1183.80 698.20 V716.00 Q1183.80 716.00 1183.80 716.00 H1131.00 Q1129.00 716.00 1129.00 714.00 V700.20 Q1129.00 698.20 1131.00 698.20Z" fill="#e07b1a"/>
<path d="M1185.00 698.20 H1247.00 Q1249.00 698.20 1249.00 700.20 V714.00 Q1249.00 716.00 1247.00 716.00 H1185.00 Q1185.00 716.00 1185.00 716.00 V698.20 Q1185.00 698.20 1185.00 698.20Z" fill="#e07b1a"/>
<path d="M1131.00 768.10 H1183.80 Q1183.80 768.10 1183.80 768.10 V785.90 Q1183.80 785.90 1183.80 785.90 H1131.00 Q1129.00 785.90 1129.00 783.90 V770.10 Q1129.00 768.10 1131.00 768.10Z" fill="#c96e17"/>
<path d="M1185.00 768.10 H1247.00 Q1249.00 768.10 1249.00 770.10 V783.90 Q1249.00 785.90 1247.00 785.90 H1185.00 Q1185.00 785.90 1185.00 785.90 V768.10 Q1185.00 768.10 1185.00 768.10Z" fill="#c96e17"/>
<path d="M1131.00 786.10 H1183.80 Q1183.80 786.10 1183.80 786.10 V803.90 Q1183.80 803.90 1183.80 803.90 H1131.00 Q1129.00 803.90 1129.00 801.90 V788.10 Q1129.00 786.10 1131.00 786.10Z" fill="#e07b1a"/>
<path d="M1185.00 786.10 H1247.00 Q1249.00 786.10 1249.00 788.10 V801.90 Q1249.00 803.90 1247.00 803.90 H1185.00 Q1185.00 803.90 1185.00 803.90 V786.10 Q1185.00 786.10 1185.00 786.10Z" fill="#e07b1a"/>
<path d="M1385.00 672.10 H1437.70 Q1437.70 672.10 1437.70 672.10 V689.90 Q1437.70 689.90 1437.70 689.90 H1385.00 Q1383.00 689.90 1383.00 687.90 V674.10 Q1383.00 672.10 1385.00 672.10Z" fill="#3179f5"/>
<path d="M1438.90 672.10 H1492.70 Q1494.70 672.10 1494.70 674.10 V687.90 Q1494.70 689.90 1492.70 689.90 H1438.90 Q1438.90 689.90 1438.90 689.90 V672.10 Q1438.90 672.10 1438.90 672.10Z" fill="#3179f5"/>
<path d="M1385.00 690.30 H1437.70 Q1437.70 690.30 1437.70 690.30 V708.10 Q1437.70 708.10 1437.70 708.10 H1385.00 Q1383.00 708.10 1383.00 706.10 V692.30 Q1383.00 690.30 1385.00 690.30Z" fill="#2553e3"/>
<path d="M1438.90 690.30 H1492.70 Q1494.70 690.30 1494.70 692.30 V706.10 Q1494.70 708.10 1492.70 708.10 H1438.90 Q1438.90 708.10 1438.90 708.10 V690.30 Q1438.90 690.30 1438.90 690.30Z" fill="#2553e3"/>
<path d="M1385.00 746.00 H1437.70 Q1437.70 746.00 1437.70 746.00 V763.80 Q1437.70 763.80 1437.70 763.80 H1385.00 Q1383.00 763.80 1383.00 761.80 V748.00 Q1383.00 746.00 1385.00 746.00Z" fill="#3179f5"/>
<path d="M1438.90 746.00 H1492.70 Q1494.70 746.00 1494.70 748.00 V761.80 Q1494.70 763.80 1492.70 763.80 H1438.90 Q1438.90 763.80 1438.90 763.80 V746.00 Q1438.90 746.00 1438.90 746.00Z" fill="#3179f5"/>
</svg>
<div class="a t13" style="left:1135px;top:699.0px;color:#f2f2f2">Max</div>
<div class="a t13" style="left:1129px;width:114.2px;text-align:right;top:699.0px;color:#f2f2f2">60.15%</div>
<div class="a t13" style="left:1135px;top:768.9px;color:#f2f2f2">Current</div>
<div class="a t13" style="left:1129px;width:114.2px;text-align:right;top:768.9px;color:#f2f2f2">−42.60%</div>
<div class="a t13" style="left:1135px;top:786.9px;color:#f2f2f2">Min</div>
<div class="a t13" style="left:1129px;width:114.2px;text-align:right;top:786.9px;color:#f2f2f2">−59.50%</div>
<div class="a t13" style="left:1389px;top:674.2px;color:#f2f2f2">Max</div>
<div class="a t13" style="left:1444px;top:674.2px;color:#f2f2f2">81.70%</div>
<div class="a t13" style="left:1389px;top:692.4px;color:#f2f2f2">Current</div>
<div class="a t13" style="left:1444px;top:692.4px;color:#f2f2f2">71.02%</div>
<div class="a t13" style="left:1389px;top:748.1px;color:#f2f2f2">Min</div>
<div class="a t13" style="left:1444px;top:748.1px;color:#f2f2f2">−9.58%</div>
<div class="a t11 axl" style="left:791.3px;width:100px;text-align:right;letter-spacing:0.3px;top:652.5px">440.00 K</div>
<div class="a t11 axl" style="left:791.3px;width:100px;text-align:right;letter-spacing:0.3px;top:693.9px">330.00 K</div>
<div class="a t11 axl" style="left:791.3px;width:100px;text-align:right;letter-spacing:0.3px;top:733.4px">220.00 K</div>
<div class="a t11 axl" style="left:791.3px;width:100px;text-align:right;letter-spacing:0.3px;top:774.4px">110.00 K</div>
<div class="a t11 axl" style="left:791.3px;width:100px;text-align:right;letter-spacing:0.3px;top:814.7px">0.00</div>
<div class="a t11 axl" style="left:1720px;top:673.7px">100.00%</div>
<div class="a t11 axl" style="left:1720px;top:708.6px">50.00%</div>
<div class="a t11 axl" style="left:1720px;top:742.6px">0.00%</div>
<div class="a t11 axl" style="left:1720px;top:777.8px">−50.00%</div>
<div class="a t11 axl" style="left:1720px;top:811.6px">−100.00%</div>
<span class="a" style="left:285.7px;top:844.3px;width:8.3px;height:8.3px;border-radius:50%;background:#089981"></span><div class="a t13 legt" style="left:301.6px;top:841.5px">Total profit</div>
<span class="a" style="left:377.4px;top:844.3px;width:8.3px;height:8.3px;border-radius:50%;background:#f23645"></span><div class="a t13 legt" style="left:394.1px;top:841.5px">Total loss</div>
<span class="a" style="left:463.8px;top:844.3px;width:8.3px;height:8.3px;border-radius:50%;background:#ff9800"></span><div class="a t13 legt" style="left:479.9px;top:841.5px">Commission</div>
<span class="a" style="left:567px;top:844.3px;width:8.3px;height:8.3px;border-radius:50%;background:#3179f5"></span><div class="a t13 legt" style="left:583.6px;top:841.5px">Total P&amp;L</div>
<span class="a" style="left:1227.9px;top:844.3px;width:8.3px;height:8.3px;border-radius:50%;background:#ff9800"></span><div class="a t13 legt" style="left:1244.6px;top:841.5px">P&amp;L for buy &amp; hold</div>
<span class="a" style="left:1367.9px;top:844.3px;width:8.3px;height:8.3px;border-radius:50%;background:#3179f5"></span><div class="a t13 legt" style="left:1384.3px;top:841.5px">P&amp;L for strategy</div>
<div id="bench"></div>

<!-- returns -->
<div class="a" style="left:17px;top:874px;width:1781px;height:40px;background:#202020"></div>
<div class="a t14 b" style="left:33px;top:887.15px">Returns</div>
<div class="a t14 grey" style="left:33px;top:927.15px">Metric</div>
<div class="a t14 grey" style="left:702px;top:927.15px">All</div>
<div class="a t14 grey" style="left:1042px;top:927.15px">Long</div>
<div class="a t14 grey" style="left:1396px;top:927.15px">Short</div>
<div class="a" style="left:17px;top:955px;width:1781px;height:1px;background:#3a3a3a"></div>
<div class="a t14" style="left:33px;top:977.15px">Initial capital</div>
<div class="a t14" style="left:623px;top:975px">100,000.00<span style="font-size:10px;margin-left:3px">USD</span></div>
<div class="a" style="left:17px;top:1012px;width:1781px;height:1px;background:#3a3a3a"></div>
<div class="a t14" style="left:33px;top:1034px">Open P&amp;L</div>
<div class="a t14" style="left:685.2px;top:1023px">0<span style="font-size:10px;margin-left:3px">USD</span></div>
</body></html>
